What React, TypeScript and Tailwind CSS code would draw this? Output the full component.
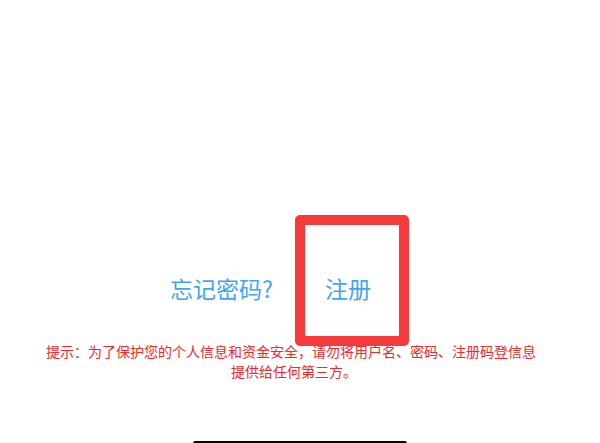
import React from "react";

export default function App() {
  return (
    <div
      className="relative w-[600px] h-[443px] overflow-hidden bg-white"
      style={{ fontFamily: '"Noto Sans CJK SC", "Noto Sans", sans-serif' }}
    >
      <div className="flex flex-col pt-[273px]">
        <div className="flex items-center pl-[170px] text-[23px] leading-[30px] text-[#42a6ee]">
          <span className="w-[155px]">忘记密码?</span>
          <span className="relative">
            注册
            <span className="absolute left-[-30px] top-[-58px] w-[114px] h-[131px] rounded-[5px] border-[10px] border-[#f43a3a]" />
          </span>
        </div>
        <div className="mt-[38px] ml-[41px] w-[500px] flex flex-col items-center text-[14px] leading-[20px] text-[#f0282c] whitespace-nowrap">
          <div className="h-[20px]">提示：为了保护您的个人信息和资金安全，请勿将用户名、密码、注册码登信息</div>
          <div className="h-[20px] pl-[6px]">提供给任何第三方。</div>
        </div>
      </div>
      <div className="absolute left-[193px] top-[441px] w-[214px] h-[5px] rounded-full bg-black" />
    </div>
  );
}
